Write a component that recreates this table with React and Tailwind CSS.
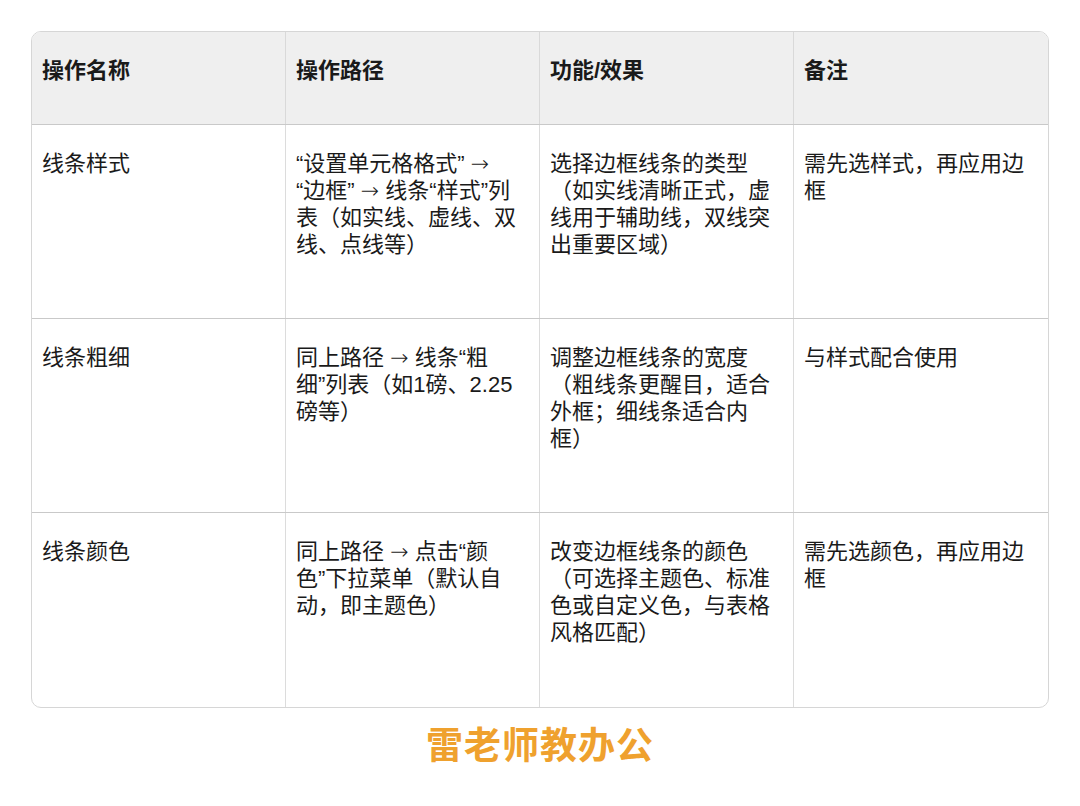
const headers = ['操作名称', '操作路径', '功能/效果', '备注'];

const Arrow = () => <span className="font-['DejaVu_Sans'] font-light">→</span>;

const rows = [
  [
    '线条样式',
    <>
      “设置单元格格式” <Arrow /> <span className="whitespace-nowrap">“边框”</span> <Arrow /> 线条“样式”列表（如实线、虚线、双线、点线等）
    </>,
    '选择边框线条的类型（如实线清晰正式，虚线用于辅助线，双线突出重要区域）',
    '需先选样式，再应用边框',
  ],
  [
    '线条粗细',
    <>
      同上路径 <Arrow /> 线条“粗细”列表（如1磅、2.25磅等）
    </>,
    '调整边框线条的宽度（粗线条更醒目，适合外框；细线条适合内框）',
    '与样式配合使用',
  ],
  [
    '线条颜色',
    <>
      同上路径 <Arrow /> 点击“颜色”下拉菜单（默认自动，即主题色）
    </>,
    '改变边框线条的颜色（可选择主题色、标准色或自定义色，与表格风格匹配）',
    '需先选颜色，再应用边框',
  ],
];

const App = () => {
  return (
    <div
      className="w-[1080px] h-[806px] bg-white pt-[31px]"
      style={{ fontFamily: '"Liberation Sans", "Noto Sans CJK SC", sans-serif' }}
    >
      <div className="mx-[31px] border border-[#d6d6d6] rounded-[10px] overflow-hidden">
        <div className="grid grid-cols-4 h-[93px] bg-[#efefef] border-b border-[#c9c9c9]">
          {headers.map((h, i) => (
            <div
              key={h}
              className={`pl-[10px] pr-[14px] pt-[25px] text-[22px] leading-[27px] font-bold text-[#1a1a1a] ${i < 3 ? 'border-r border-[#d9d9d9]' : ''}`}
            >
              {h}
            </div>
          ))}
        </div>

        {rows.map((row, r) => (
          <div
            key={r}
            className={`grid grid-cols-4 h-[194px] ${r < rows.length - 1 ? 'border-b border-[#c9c9c9]' : ''}`}
          >
            {row.map((cell, i) => (
              <div
                key={i}
                className={`pl-[10px] pr-[14px] pt-[25px] text-[22px] leading-[27px] text-[#1a1a1a] ${i < 3 ? 'border-r border-[#dcdcdc]' : ''}`}
              >
                {cell}
              </div>
            ))}
          </div>
        ))}
      </div>

      <div className="mt-[19px] text-center text-[37px] leading-[40px] font-bold text-[#efa12e] tracking-[1px]">
        雷老师教办公
      </div>
    </div>
  );
};

export default App;
